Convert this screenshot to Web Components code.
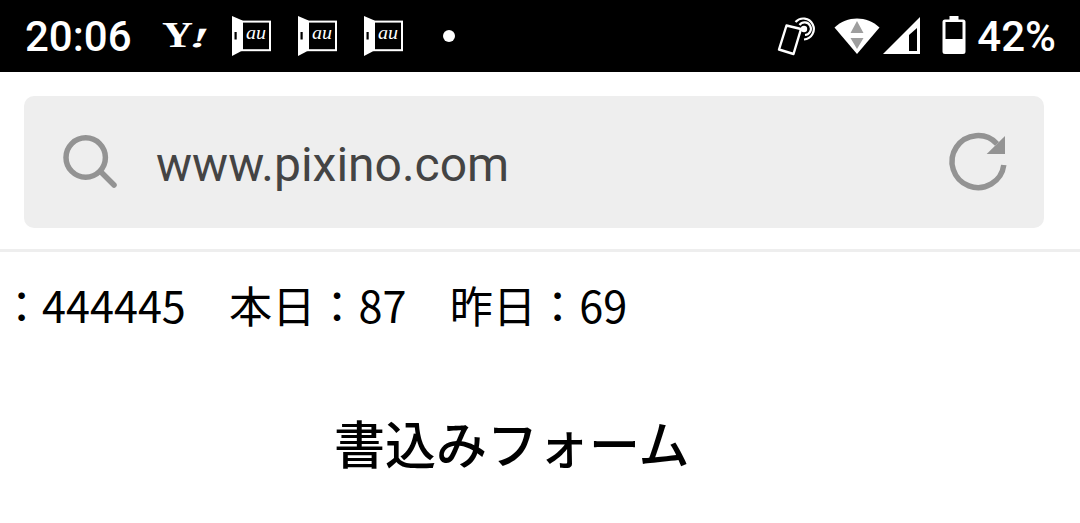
<!DOCTYPE html>
<html lang="ja">
<head>
<meta charset="utf-8">
<title>書込みフォーム</title>
<style>
  html, body { margin: 0; padding: 0; background: #fff; overflow: hidden; height: 523px; }
  body { display: flex; flex-direction: column; font-family: "Noto Sans CJK JP", sans-serif; }
</style>
</head>
<body>
<status-bar></status-bar>
<url-bar url="www.pixino.com"></url-bar>
<page-body></page-body>

<script>
class AuIcon extends HTMLElement {
  constructor () {
    super();
    this.attachShadow({ mode: 'open' });
    this.shadowRoot.innerHTML = /* html */ `
    <style>:host { display: block; width: 40px; height: 40px; } svg { display: block; }</style>
    <svg width="40" height="40" viewBox="0 0 40 40">
      <path fill="#fff" d="M0 0 L10.500 4.500 V34.500 L0 40 Z"/>
      <rect x="2.500" y="16" width="2.200" height="7.500" fill="#000"/>
      <rect x="10" y="5.600" width="28" height="28.600" fill="none" stroke="#fff" stroke-width="2"/>
      <text x="14" y="23" fill="#fff" font-family="'Liberation Serif', serif" font-style="italic" font-size="18" textLength="20" lengthAdjust="spacingAndGlyphs">au</text>
    </svg>`;
  }
}

class StatusBar extends HTMLElement {
  constructor () {
    super();
    this.attachShadow({ mode: 'open' });
    this.shadowRoot.innerHTML = /* html */ `
    <style>
      :host {
        display: flex;
        align-items: center;
        flex: none;
        height: 72px;
        padding: 0 24px 0 25px;
        background: #000;
        color: #fff;
        font-family: Roboto, sans-serif;
      }
      .time { font-size: 42px; font-weight: 500; width: 137px; flex: none; }
      .left { display: flex; align-items: center; gap: 26px; }
      .yahoo { display: block; width: 54px; height: 40px; margin-right: -10px; }
      .dot { width: 12px; height: 12px; border-radius: 50%; background: #fff; margin-left: 39px; }
      .right { display: flex; align-items: center; margin-left: auto; }
      .right svg { display: block; }
      .pct { font-size: 42px; font-weight: 500; margin-left: 11px; }
    </style>
    <span class="time">20:06</span>
    <div class="left">
      <svg class="yahoo" viewBox="0 0 54 40">
        <text x="0" y="31" fill="#fff" font-family="'Liberation Serif', serif" font-weight="700" font-size="35" textLength="31" lengthAdjust="spacingAndGlyphs">Y</text>
        <text transform="translate(26 31) skewX(-20) scale(1.800 1)" fill="#fff" font-family="'Liberation Serif', serif" font-weight="700" font-size="28">!</text>
      </svg>
      <au-icon></au-icon>
      <au-icon></au-icon>
      <au-icon></au-icon>
    </div>
    <span class="dot"></span>
    <div class="right">
      <svg width="40" height="40" viewBox="0 0 40 40" fill="none" stroke="#fff" stroke-linejoin="round">
        <path stroke-width="2.400" d="M10.500 9.500 L25 13 L17.500 38 L3 33.500 Z"/>
        <path stroke-width="2.200" d="M19.500 6 A10.500 10.500 0 1 1 28 23.500"/>
        <path stroke-width="2.200" d="M23.500 9 A6.300 6.300 0 1 1 29 19"/>
        <circle cx="28" cy="13" r="3.200" fill="#fff" stroke="none"/>
      </svg>
      <svg style="margin-left:18px" width="46" height="40" viewBox="0 0 46 40">
        <path fill="#fff" d="M0.500 11.500 C13 -.5 33 -.5 45.500 11.500 L23 38 Z"/>
        <path fill="#9e9e9e" d="M23 5 L29.500 17 H16.500 Z M16.500 22 H29.500 L23 33 Z"/>
      </svg>
      <svg style="margin-left:3px" width="38" height="40" viewBox="0 0 38 40">
        <path fill="#fff" d="M0 38 L37 1 V38 Z"/>
        <path fill="#000" d="M26 19 L34 12 V35 H26 Z"/>
      </svg>
      <svg style="margin-left:21px" width="24" height="40" viewBox="0 0 24 40">
        <path fill="#fff" d="M7.500 0 H16.500 V3.500 H21 A2.500 2.500 0 0 1 23.500 6 V35.500 A2.500 2.500 0 0 1 21 38 H3 A2.500 2.500 0 0 1 .5 35.500 V6 A2.500 2.500 0 0 1 3 3.500 H7.500 Z"/>
        <rect x="3.500" y="6" width="17" height="17" fill="#000"/>
      </svg>
      <span class="pct">42%</span>
    </div>`;
  }
}

class UrlBar extends HTMLElement {
  constructor () {
    super();
    this.attachShadow({ mode: 'open' });
    this.shadowRoot.innerHTML = /* html */ `
    <style>
      :host {
        display: block;
        flex: none;
        padding: 24px 36px 21px 24px;
        border-bottom: 3px solid #eee;
      }
      .box {
        display: flex;
        align-items: center;
        height: 132px;
        padding: 0 36px;
        border-radius: 10px;
        background: #eee;
      }
      svg { display: block; flex: none; }
      .url {
        margin: 4px 0 0 36px;
        flex: 1;
        font: 400 48px Roboto, sans-serif;
        color: #444;
      }
    </style>
    <div class="box">
      <svg width="60" height="60" viewBox="0 0 60 60" fill="none" stroke="#939393" stroke-linecap="round">
        <circle cx="25.700" cy="25.500" r="19.700" stroke-width="5.500"/>
        <path d="M41 40 L54 53" stroke-width="5.500"/>
      </svg>
      <span class="url"></span>
      <svg width="64" height="64" viewBox="0 0 64 64">
        <path fill="none" stroke="#939393" stroke-width="5.500" d="M53 13.800 A26 26 0 1 0 59.800 35"/>
        <path fill="#939393" d="M61 6 V24 H42.700 Z"/>
      </svg>
    </div>`;
    this.shadowRoot.querySelector('.url').textContent = this.getAttribute('url');
  }
}

class PageBody extends HTMLElement {
  constructor () {
    super();
    this.attachShadow({ mode: 'open' });
    this.shadowRoot.innerHTML = /* html */ `
    <style>
      :host {
        display: block;
        flex: 1;
        overflow: hidden;
        color: #000;
        font-family: "Noto Sans CJK JP", sans-serif;
      }
      .count {
        margin-top: 20px;
        font-size: 43.200px;
        line-height: 64px;
        white-space: nowrap;
      }
      .count b { font-family: "Noto Sans CJK TC", sans-serif; font-weight: 400; }
      .count b.first { letter-spacing: -1.200px; }
      h1 {
        margin: 70px 0 0 334px;
        font-size: 51px;
        font-weight: 500;
        line-height: 72px;
        white-space: nowrap;
      }
    </style>
    <div class="count"><b class="first">：</b>444445　本日<b>：</b>87　昨日<b>：</b>69</div>
    <h1>書込みフォーム</h1>`;
  }
}

customElements.define('au-icon', AuIcon);
customElements.define('status-bar', StatusBar);
customElements.define('url-bar', UrlBar);
customElements.define('page-body', PageBody);
</script>
</body>
</html>
